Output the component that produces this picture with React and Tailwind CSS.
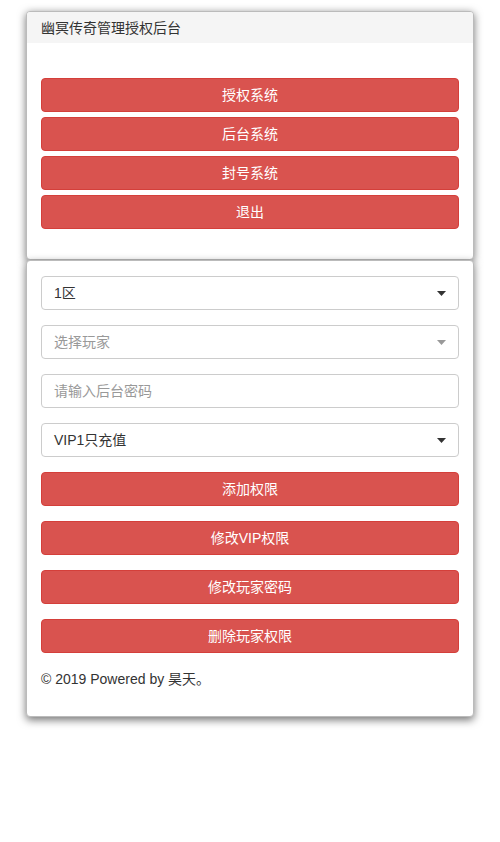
const NAV = ["授权系统", "后台系统", "封号系统", "退出"];
const ACTIONS = ["添加权限", "修改VIP权限", "修改玩家密码", "删除玩家权限"];

const font = {
  fontFamily: '"Liberation Sans", "Noto Sans CJK SC", sans-serif',
};

function Caret({ muted }) {
  return (
    <svg width="9" height="5" viewBox="0 0 9 5" className="shrink-0">
      <path d="M0 0h9L4.5 5z" fill={muted ? "#999" : "#333"} />
    </svg>
  );
}

function Select({ value, placeholder }) {
  return (
    <div className="flex items-center justify-between h-[34px] px-3 border border-[#ccc] rounded-[4px] bg-white">
      <span className={value ? "text-[#333]" : "text-[#999]"}>{value || placeholder}</span>
      <Caret muted={!value} />
    </div>
  );
}

function RedButton({ children }) {
  return (
    <button className="w-full h-[34px] rounded-[4px] bg-[#d9534f] border border-[#d43f3a] text-white text-sm">
      {children}
    </button>
  );
}

export default function App() {
  return (
    <div className="min-h-[842px] bg-white pt-[11px] text-sm text-[#333]" style={font}>
      <div className="w-[448px] mx-auto">
        {/* top panel */}
        <div className="rounded-[4px] bg-white shadow-[0_2px_8px_rgba(0,0,0,0.55)] border border-[#bbb] overflow-hidden">
          <div className="h-[31px] bg-[#f5f5f5] px-[14px] flex items-center">幽冥传奇管理授权后台</div>
          <div className="px-[14px] pt-[35px] pb-[30px] flex flex-col gap-[5px]">
            {NAV.map((label) => (
              <RedButton key={label}>{label}</RedButton>
            ))}
          </div>
        </div>

        {/* form panel */}
        <div className="rounded-[4px] bg-white shadow-[0_3px_8px_rgba(0,0,0,0.55)] border border-[#bbb] px-[14px] pt-[15px] pb-[27px]">
          <div className="flex flex-col gap-[15px]">
            <Select value="1区" />
            <Select placeholder="选择玩家" />
            <div className="h-[34px] px-3 flex items-center border border-[#ccc] rounded-[4px] text-[#999]">
              请输入后台密码
            </div>
            <Select value="VIP1只充值" />
            {ACTIONS.map((label) => (
              <RedButton key={label}>{label}</RedButton>
            ))}
          </div>
          <p className="mt-[16px] leading-5">© 2019 Powered by 昊天。</p>
        </div>
      </div>
    </div>
  );
}
